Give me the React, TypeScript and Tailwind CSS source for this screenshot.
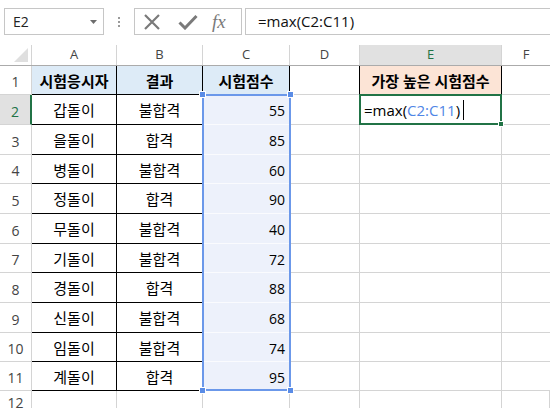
import { Fragment } from "react";

const font = { fontFamily: '"Open Sans", "Noto Sans CJK KR", sans-serif' };

const data: [string, string, number][] = [
  ["갑돌이", "불합격", 55],
  ["을돌이", "합격", 85],
  ["병돌이", "불합격", 60],
  ["정돌이", "합격", 90],
  ["무돌이", "불합격", 40],
  ["기돌이", "불합격", 72],
  ["경돌이", "합격", 88],
  ["신돌이", "불합격", 68],
  ["임돌이", "불합격", 74],
  ["계돌이", "합격", 95],
];

// row heights for rows 1..11
const heights = [29, 30, 30, 29, 30, 30, 29, 30, 30, 29, 29];

const FormulaBar = () => (
  <div className="flex h-[45px] items-start pt-[8px] bg-white">
    <div className="ml-[4px] flex h-[27px] w-[100px] items-center justify-between border border-[#c6c6c6] pl-[8px] pr-[6px] text-[14px] text-[#222]">
      <span>E2</span>
      <svg width="7" height="4" viewBox="0 0 7 4">
        <path d="M0 0h7L3.5 4z" fill="#6d6d6d" />
      </svg>
    </div>
    <div className="flex h-[27px] w-[30px] flex-col items-center justify-center gap-[2px]">
      <span className="block h-[2px] w-[2px] bg-[#9a9a9a]" />
      <span className="block h-[2px] w-[2px] bg-[#9a9a9a]" />
      <span className="block h-[2px] w-[2px] bg-[#9a9a9a]" />
    </div>
    <div className="flex h-[27px] w-[108px] items-center border border-[#c6c6c6]">
      <svg width="18" height="18" viewBox="0 0 18 18" className="ml-[8px]">
        <path d="M2 2L16 16M16 2L2 16" stroke="#7a7a7a" strokeWidth="2.2" />
      </svg>
      <svg width="20" height="16" viewBox="0 0 20 16" className="ml-[17px]">
        <path d="M1.5 8.5L7 14L18.5 2" stroke="#7a7a7a" strokeWidth="3" fill="none" />
      </svg>
      <span
        className="ml-[14px] text-[19px] italic leading-none text-[#7a7a7a]"
        style={{ fontFamily: '"Liberation Serif", serif' }}
      >
        fx
      </span>
    </div>
    <div className="ml-[3px] flex h-[27px] flex-1 items-center border border-r-0 border-[#c6c6c6] pl-[12px] text-[15px] text-[#111]">
      =max(C2:C11)
    </div>
  </div>
);

const colWidths = [32, 85, 86, 87, 70, 142, 48];

const ColumnHeader = () => (
  <div className="flex h-[21px] border-b border-[#ababab] text-[13px] text-[#444]">
    <div className="relative h-full w-[32px] shrink-0 border-r border-[#d4d4d4]">
      <svg width="14" height="14" viewBox="0 0 14 14" className="absolute right-[3px] bottom-[3px]">
        <path d="M14 0V14H0z" fill="#dfdfdf" />
      </svg>
    </div>
    <div className="flex w-[85px] shrink-0 items-center justify-center border-r border-[#d4d4d4]">A</div>
    <div className="flex w-[86px] shrink-0 items-center justify-center border-r border-[#d4d4d4]">B</div>
    <div className="flex w-[87px] shrink-0 items-center justify-center border-r border-[#d4d4d4]">C</div>
    <div className="flex w-[70px] shrink-0 items-center justify-center border-r border-[#d4d4d4]">D</div>
    <div className="flex w-[142px] shrink-0 items-center justify-center border-r border-[#d4d4d4] bg-[#e1e1e1] text-[#217346]">E</div>
    <div className="flex w-[48px] shrink-0 items-center justify-center">F</div>
  </div>
);

export default function App() {
  return (
    <div className="h-[408px] w-[550px] overflow-hidden bg-white" style={font}>
      <FormulaBar />
      <ColumnHeader />
      <div className="relative">
        {heights.map((h, i) => {
          const r = i + 1;
          const row = i > 0 ? data[i - 1] : null;
          const isHead = r === 1;
          return (
            <div key={r} className="flex" style={{ height: h }}>
              <div
                className={
                  r === 2
                    ? "flex w-[32px] shrink-0 items-end justify-center border-r-2 border-b border-r-[#217346] border-b-[#d4d4d4] bg-[#e1e1e1] pb-[2px] text-[14px] text-[#217346]"
                    : "flex w-[32px] shrink-0 items-end justify-center border-r border-b border-[#d4d4d4] pb-[2px] text-[14px] text-[#444]"
                }
              >
                {r}
              </div>
              <div
                className={
                  isHead
                    ? "flex w-[85px] shrink-0 items-center justify-center border-r border-b border-black bg-[#ddebf7] pt-[2px] text-[15px] font-bold text-black"
                    : "flex w-[85px] shrink-0 items-center justify-center border-r border-b border-black pt-[2px] text-[15px] text-black"
                }
              >
                {isHead ? "시험응시자" : row![0]}
              </div>
              <div
                className={
                  isHead
                    ? "flex w-[86px] shrink-0 items-center justify-center border-r border-b border-black bg-[#ddebf7] pt-[2px] text-[15px] font-bold text-black"
                    : "flex w-[86px] shrink-0 items-center justify-center border-r border-b border-black pt-[2px] text-[15px] text-black"
                }
              >
                {isHead ? "결과" : row![1]}
              </div>
              <div
                className={
                  isHead
                    ? "flex w-[87px] shrink-0 items-center justify-center border-r border-b border-black bg-[#ddebf7] pt-[2px] text-[15px] font-bold text-black"
                    : "flex w-[87px] shrink-0 items-center justify-end border-r border-b border-r-black border-b-[#fafbfe] bg-[#edf1fb] pr-[4px] pt-[2px] text-[14px] text-black"
                }
              >
                {isHead ? "시험점수" : row![2]}
              </div>
              <div
                className={
                  isHead
                    ? "w-[70px] shrink-0 border-r border-b border-r-black border-b-[#d4d4d4]"
                    : "w-[70px] shrink-0 border-r border-b border-[#d4d4d4]"
                }
              />
              <div
                className={
                  isHead
                    ? "flex w-[142px] shrink-0 items-center justify-center border-r border-b border-black bg-[#fce4d6] pt-[2px] text-[15px] font-bold text-black"
                    : "w-[142px] shrink-0 border-r border-b border-[#d4d4d4]"
                }
              >
                {isHead ? "가장 높은 시험점수" : null}
              </div>
              <div className="w-[48px] shrink-0 border-b border-[#d4d4d4]" />
            </div>
          );
        })}
        <div className="flex h-[20px]">
          <div className="flex w-[32px] shrink-0 items-start justify-center border-r border-[#d4d4d4] pt-[1px] text-[14px] text-[#444]">
            12
          </div>
          {colWidths.slice(1).map((w, k) => (
            <Fragment key={k}>
              <div className="shrink-0 border-r border-[#d4d4d4]" style={{ width: w }} />
            </Fragment>
          ))}
        </div>

        {/* referenced range C2:C11 */}
        <div className="pointer-events-none absolute left-[202px] top-[28px] h-[297px] w-[89px] border-2 border-[#6b98ea]">
          <span className="absolute -left-[5px] -top-[5px] h-[7px] w-[7px] border border-white bg-[#5a8ce6]" />
          <span className="absolute -right-[5px] -top-[5px] h-[7px] w-[7px] border border-white bg-[#5a8ce6]" />
          <span className="absolute -left-[5px] -bottom-[5px] h-[7px] w-[7px] border border-white bg-[#5a8ce6]" />
          <span className="absolute -right-[5px] -bottom-[5px] h-[7px] w-[7px] border border-white bg-[#5a8ce6]" />
        </div>

        {/* active cell E2 */}
        <div className="absolute left-[359px] top-[28px] flex h-[31px] w-[143px] items-center border-2 border-[#217346] bg-white pl-[3px] pt-[1px] text-[15px] text-black">
          <span>=max(</span>
          <span className="text-[#4f86e6]">C2:C11</span>
          <span>)</span>
          <span className="ml-[3px] h-[20px] w-px bg-black" />
          <span className="absolute -right-[4px] -bottom-[4px] h-[6px] w-[6px] border border-white bg-[#217346]" />
        </div>
      </div>
    </div>
  );
}
